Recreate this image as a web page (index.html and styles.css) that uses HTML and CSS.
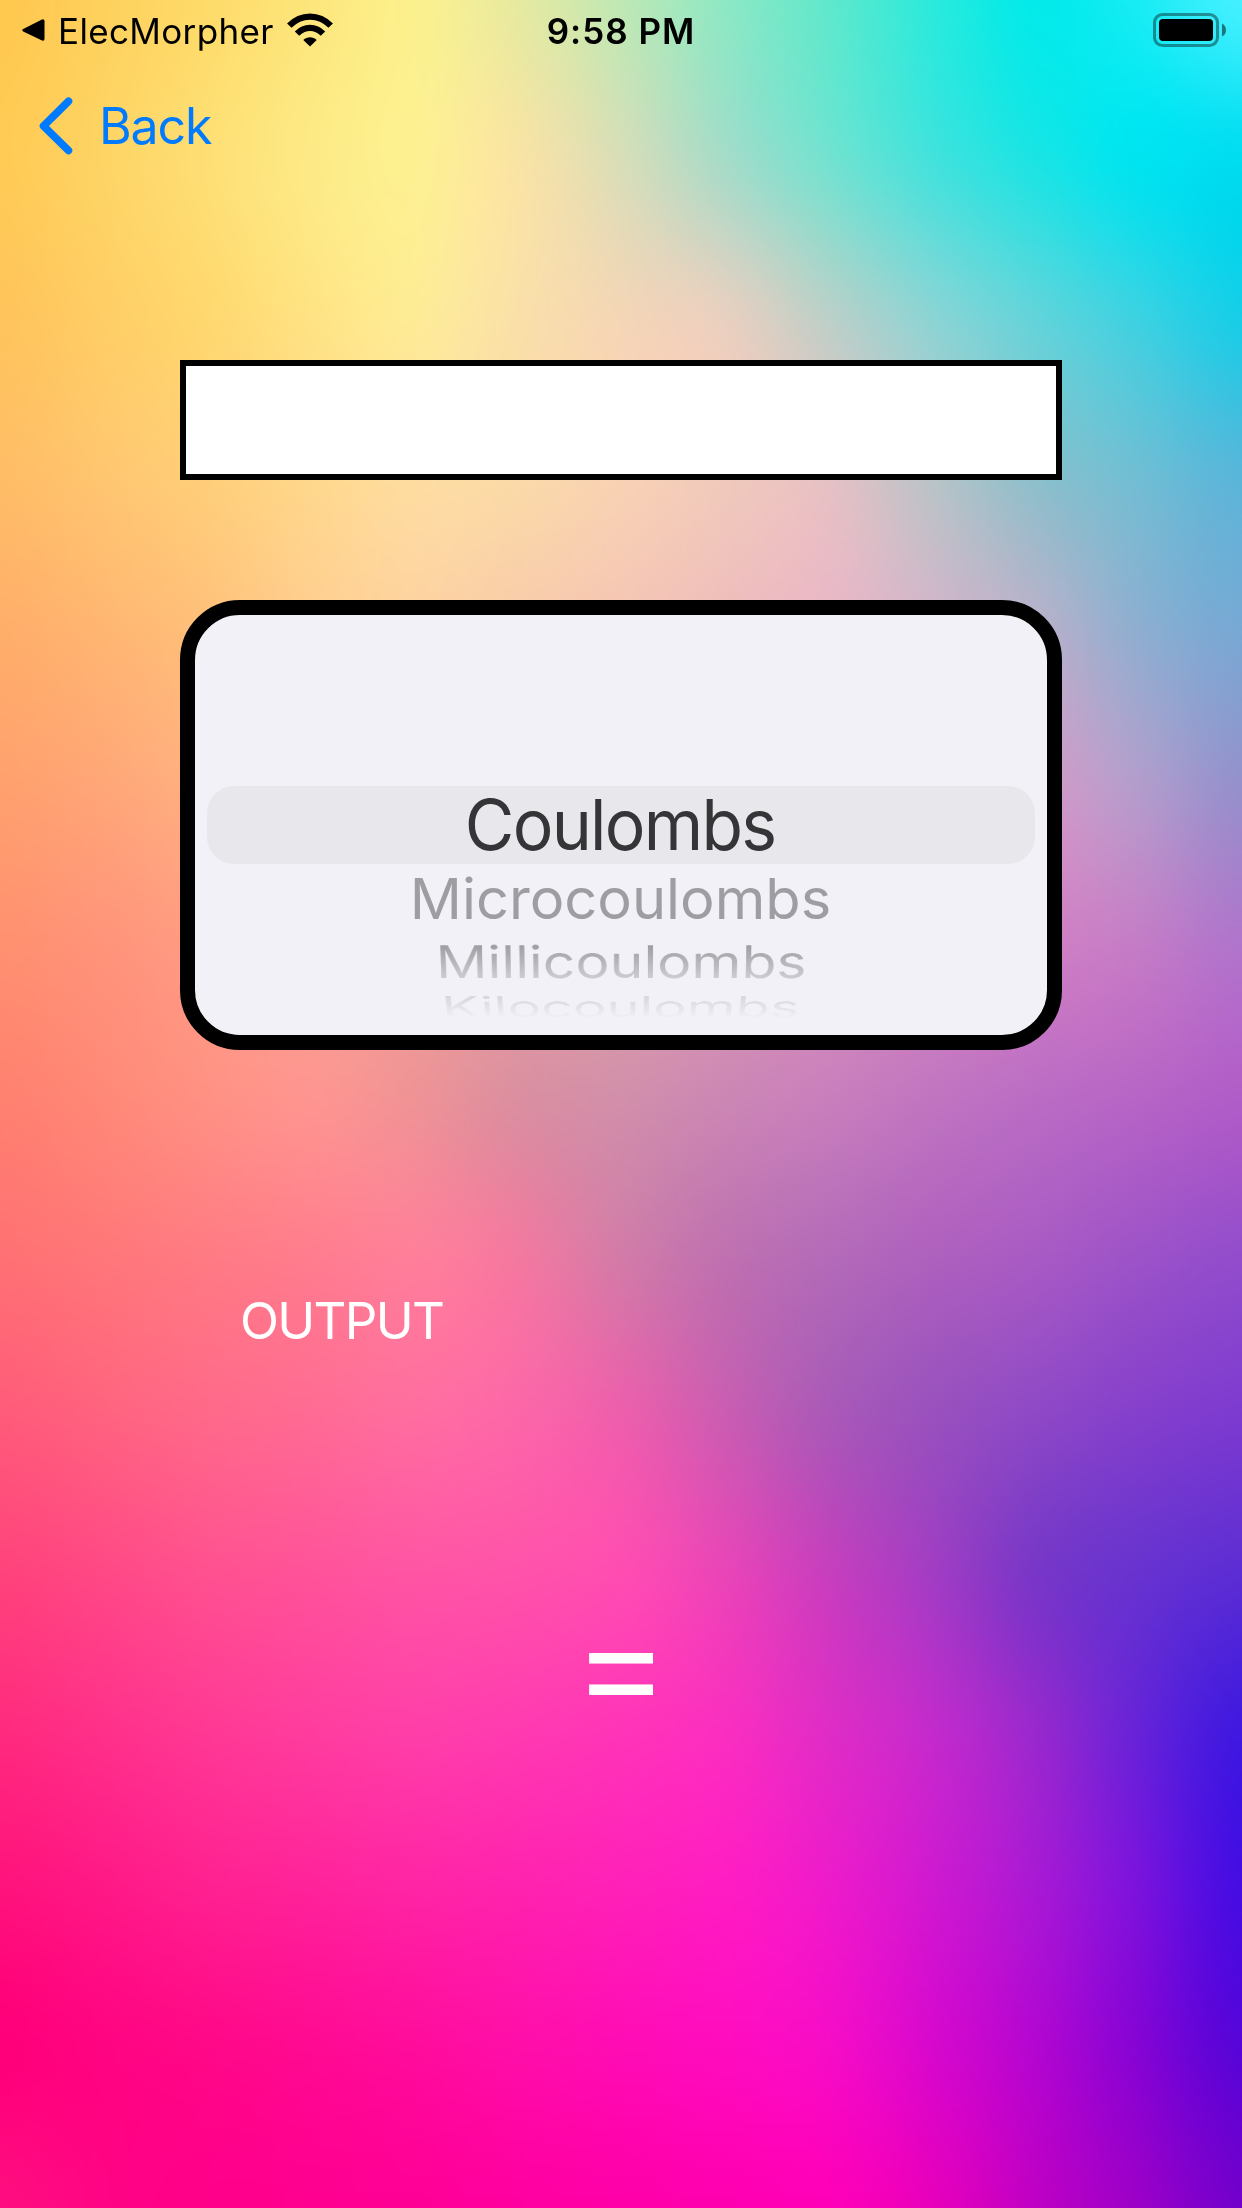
FILE: index.html
```html
<!DOCTYPE html>
<html lang="en">
<head>
<meta charset="utf-8">
<title>Charge converter</title>
<link rel="stylesheet" href="styles.css">
</head>
<body>
<canvas class="backdrop" id="backdrop" width="414" height="736"></canvas>
<div class="screen">
  <header class="status">
    <div class="status-left">
      <svg class="return-icon" width="23" height="23" viewBox="0 0 23 23"><path d="M1.2 10.1 20 .5Q22.500-.2 22.500 2.200V19.800Q22.500 22.200 20 21.500L1.200 12.400Q-.8 11.200 1.200 10.100Z"/></svg>
      <span class="return-app">ElecMorpher</span>
      <svg class="wifi" width="46" height="34" viewBox="0 0 46 34">
        <g fill="none" stroke="#000" stroke-width="6.200">
          <path d="M2.300 12.700C14 .5 32 .5 43.700 12.700"/>
          <path d="M10 20.600C17.500 13 28.500 13 36 20.600"/>
        </g>
        <path d="M16.300 27C20 23.200 26 23.200 29.700 27L23 33.500Z"/>
      </svg>
    </div>
    <time class="clock">9:58 PM</time>
    <div class="status-right">
      <svg width="74" height="34" viewBox="0 0 74 34">
        <rect x="1.500" y="1.500" width="63" height="31" rx="8" fill="none" stroke="#000" stroke-opacity=".4" stroke-width="3"/>
        <rect x="6" y="6" width="54" height="22" rx="4"/>
        <path d="M69 10.500Q73 12.500 73 17T69 23.500Z" fill-opacity=".5"/>
      </svg>
    </div>
  </header>
  <nav class="nav">
    <svg width="34" height="58" viewBox="0 0 34 58"><path d="M29.500 4.200 4.500 29 29.500 53.500" fill="none" stroke="#007aff" stroke-width="7.600" stroke-linecap="round" stroke-linejoin="round"/></svg>
    <a class="back">Back</a>
  </nav>
  <main class="content">
    <input class="amount" type="text" aria-label="Amount">
    <div class="picker">
      <div class="row selected"><span>Coulombs</span></div>
      <div class="row micro"><span>Microcoulombs</span></div>
      <div class="row milli"><span>Millicoulombs</span></div>
      <div class="row kilo"><span>Kilocoulombs</span></div>
    </div>
    <p class="output">OUTPUT</p>
    <div class="equals">=</div>
  </main>
</div>
<script src="backdrop.js"></script>
</body>
</html>
```
FILE: styles.css
```css
* { box-sizing: border-box; }
body {
  margin: 0;
  font-family: Inter, "Liberation Sans", sans-serif;
  color: #000;
  overflow: hidden;
}
.backdrop {
  position: absolute;
  inset: 0;
  width: 1242px;
  height: 2208px;
  z-index: -1;
}
.screen {
  width: 1242px;
  height: 2208px;
  display: flex;
  flex-direction: column;
}
.status {
  height: 60px;
  display: grid;
  grid-template-columns: 1fr auto 1fr;
  align-items: center;
  padding: 0 15px 0 22px;
}
.status-left { display: flex; align-items: center; }
.return-app {
  margin-left: 13px;
  font-size: 35px;
  letter-spacing: 0.35px;
  line-height: 58px;
  padding-top: 2px;
}
.wifi { margin-left: 13px; }
.clock {
  font-size: 35px;
  font-weight: 600;
  letter-spacing: 1px;
  padding: 2px 7px 0 0;
}
.status-right { display: flex; justify-content: flex-end; }
.nav {
  height: 132px;
  display: flex;
  align-items: center;
  gap: 26px;
  padding-left: 39px;
}
.back {
  font-size: 50px;
  letter-spacing: -1.1px;
  color: #007aff;
}
.content {
  display: flex;
  flex-direction: column;
  padding: 168px 180px 0;
}
.amount {
  height: 120px;
  border: 6px solid #000;
  border-radius: 0;
  background: #fff;
  padding: 0 24px;
  font: inherit;
  font-size: 51px;
}
.picker {
  height: 450px;
  margin-top: 120px;
  border: 15px solid #000;
  border-radius: 60px;
  background: #f2f1f7;
  padding: 171px 12px 0;
  display: flex;
  flex-direction: column;
  overflow: hidden;
}
.row {
  display: flex;
  align-items: center;
  justify-content: center;
  font-size: 70px;
  line-height: 1;
  white-space: nowrap;
  flex: none;
}
.row span { display: block; }
.selected {
  height: 78px;
  border-radius: 27px;
  background: #e8e7ec;
  color: #353537;
}
.selected span {
  letter-spacing: -1.8px;
  transform: scaleX(.97);
  padding-right: 2px;
}
.micro { height: 70px; color: #9e9da2; }
.micro span {
  transform: scale(.825, .8);
  padding-right: 1px;
}
.milli { height: 56px; }
.milli span {
  transform: perspective(2000px) rotateX(-20deg) scale(.816, .68);
  color: transparent;
  background: linear-gradient(#a09fa3 15%, #cccbd1 85%);
  background-clip: text;
}
.kilo { height: 34px; }
.kilo span {
  transform: perspective(1700px) rotateX(-50deg) scale(.8, .64);
  color: transparent;
  background: linear-gradient(#d8d7dd 15%, #f0eff5 85%);
  background-clip: text;
}
.output {
  margin: 240px 0 0 60px;
  font-size: 51px;
  line-height: 62px;
  letter-spacing: -1.7px;
  color: #fff;
}
.equals {
  margin-top: 238px;
  text-align: center;
  font-size: 154px;
  font-weight: 300;
  -webkit-text-stroke: 1.2px #fff;
  line-height: 144px;
  color: #fff;
}
```
FILE: backdrop.js
```javascript
// Colour mesh: 13 columns by 15 rows, evenly spread over the screen.
const mesh = [
  "ffc84f fed15d fedb6a fde67c fbf08e e6eaa0 bfe8b4 8ee8c4 60e8cc 2ceadc 04eaea 18ecf4 44f0ff",
  "ffcb55 fed465 fedf75 fdea86 fdf092 f9e4a4 d8deb8 a6dcc8 74e2d0 44e2dc 1ce4e4 00e4f0 00dcf0",
  "ffc45c ffce66 ffd870 ffe384 feeb96 fae0a8 f4d6b6 e8d0c0 bcd0c8 8cd4d4 62d4da 3cd2e2 18cee8",
  "ffbd66 ffc670 ffcf7a ffd88c fedda0 fbdaa8 f8d2b4 f0cabc e4c2c4 b8c4c8 8cc0cc 70bed4 58b6da",
  "ffae6a ffb672 ffc07c ffcc90 fdd0a0 f8caaa f4c4b4 eebcbc e8b6c6 d4b4ca bcb0ca 90aed0 78a8d4",
  "ffa06e ffa678 ffb082 fcb490 f8b8a0 f4b6aa eeb4b4 e8aebc e2a8c4 dca0c8 d49ac8 b49ccc 9690cc",
  "ff9070 ff947a ff9c84 f8a090 f0a09a e8a0a4 e0a0ac da98b4 d690bc d488c0 d080c4 c47cc6 b074cc",
  "ff8070 ff8878 ff9084 fe9490 f09296 dc8ea0 d28eaa cc86b4 c87ebc c074c0 ba6cc4 b664c6 b05cc8",
  "ff7074 ff767a ff7a84 ff7c8e ff7e9a f478a0 d47aa8 c070b0 b46ab8 ae60be a85ac4 9c52c8 924ccc",
  "ff5a7a ff6280 ff688a ff6a94 ff6ca0 fc66a8 ee5eac cc5cb2 ac58b8 9a50be 8e48c6 843fcc 7c3ad0",
  "ff427c ff4886 ff5090 ff529a ff54a4 ff52aa ff4cb2 ea44b8 c83ebe a43cc4 7a36c8 6832d0 5c2cd4",
  "ff2a7e ff308a ff3894 ff3c9e ff3ea8 ff3ab0 ff34b8 fa2ec0 e02cc6 c42acc 9a28ce 6822d8 4018e0",
  "ff127c ff1886 ff2090 ff229a ff24a4 ff22ae ff20b8 ff1cc2 ee1aca d018d0 aa18d4 7c12dc 460ce2",
  "ff007a ff0482 ff0888 ff0a92 ff0c9c ff0ea8 ff0cb4 ff0cbe f60cc6 d808cc b406d0 8604d4 5804d8",
  "ff0e80 ff0484 ff008a ff0090 ff0096 ff00a0 ff00a8 ff00b0 ff00b8 e800bc c000c4 9c00c8 7400cc"
].map(r => r.split(" ").map(h => [0, 2, 4].map(i => parseInt(h.slice(i, i + 2), 16))));

const spline = (a, b, c, d, t) =>
  b + 0.5 * t * (c - a + t * (2 * a - 5 * b + 4 * c - d + t * (3 * (b - c) + d - a)));
const at = (list, i) => list[Math.max(0, Math.min(list.length - 1, i))];

const canvas = document.getElementById("backdrop");
const ctx = canvas.getContext("2d");
const { width, height } = canvas;
const image = ctx.createImageData(width, height);
for (let y = 0; y < height; y++) {
  const v = y / (height - 1) * (mesh.length - 1);
  const j = Math.min(mesh.length - 2, Math.floor(v));
  const rows = [-1, 0, 1, 2].map(k => at(mesh, j + k));
  const line = mesh[0].map((_, c) => [0, 1, 2].map(n =>
    spline(rows[0][c][n], rows[1][c][n], rows[2][c][n], rows[3][c][n], v - j)));
  for (let x = 0; x < width; x++) {
    const u = x / (width - 1) * (line.length - 1);
    const i = Math.min(line.length - 2, Math.floor(u));
    const p = (y * width + x) * 4;
    for (let n = 0; n < 3; n++) {
      image.data[p + n] = spline(at(line, i - 1)[n], line[i][n], line[i + 1][n], at(line, i + 2)[n], u - i);
    }
    image.data[p + 3] = 255;
  }
}
ctx.putImageData(image, 0, 0);
```
